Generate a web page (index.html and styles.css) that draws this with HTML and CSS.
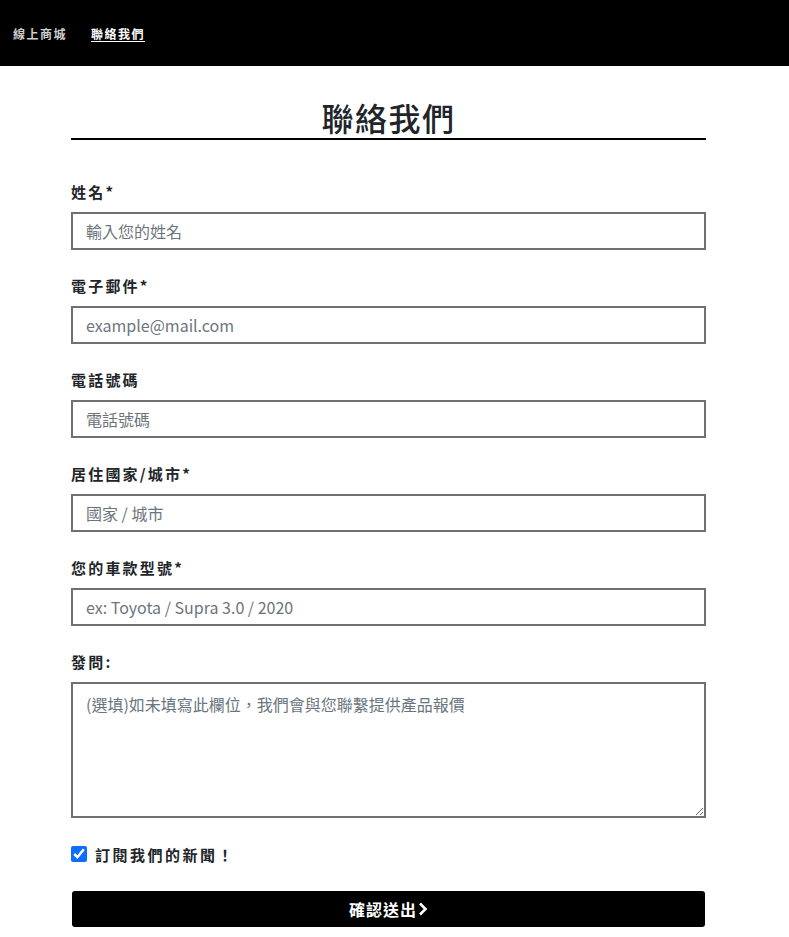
FILE: index.html
```html
<!DOCTYPE html>
<html lang="zh-Hant">
<head>
<meta charset="utf-8">
<title>聯絡我們</title>
<link rel="stylesheet" href="styles.css">
</head>
<body>
<nav class="topbar">
  <a class="nav-link" href="#">線上商城</a>
  <a class="nav-link active" href="#">聯絡我們</a>
</nav>
<main class="page">
  <h1 class="title">聯絡我們</h1>
  <form class="form">
    <div class="field">
      <label class="label">姓名*</label>
      <input class="input" type="text" placeholder="輸入您的姓名">
    </div>
    <div class="field">
      <label class="label">電子郵件*</label>
      <input class="input" type="text" placeholder="example@mail.com">
    </div>
    <div class="field">
      <label class="label">電話號碼</label>
      <input class="input" type="text" placeholder="電話號碼">
    </div>
    <div class="field">
      <label class="label">居住國家/城市*</label>
      <input class="input" type="text" placeholder="國家 / 城市">
    </div>
    <div class="field">
      <label class="label">您的車款型號*</label>
      <input class="input" type="text" placeholder="ex: Toyota / Supra 3.0 / 2020">
    </div>
    <div class="field">
      <label class="label">發問:</label>
      <textarea class="input textarea" placeholder="(選填)如未填寫此欄位，我們會與您聯繫提供產品報價"></textarea>
    </div>
    <label class="check">
      <input type="checkbox" checked>
      <span>訂閱我們的新聞！</span>
    </label>
    <button class="submit" type="button">確認送出<svg width="10" height="14" viewBox="0 0 10 14"><path d="M2 1.5 L7.5 7 L2 12.5" fill="none" stroke="#fff" stroke-width="2.6"/></svg></button>
  </form>
</main>
</body>
</html>
```

FILE: styles.css
```css
* { box-sizing: border-box; }
body {
  margin: 0;
  font-family: "Noto Sans CJK TC", "Noto Sans", sans-serif;
  color: #212529;
  background: #fff;
}
.topbar {
  height: 66px;
  background: #000;
  display: flex;
  align-items: center;
  padding-left: 13px;
  gap: 24px;
}
.nav-link {
  color: #cfcfcf;
  font-size: 12px;
  font-weight: 700;
  letter-spacing: 1.5px;
  text-decoration: none;
}
.nav-link.active {
  color: #fff;
  text-decoration: underline;
  text-underline-offset: 2px;
}
.page {
  width: 635px;
  margin-left: 71px;
  padding-top: 30px;
  padding-bottom: 10px;
}
.title {
  margin: 0;
  text-align: center;
  font-size: 32px;
  font-weight: 500;
  line-height: 42px;
  letter-spacing: 1.5px;
  border-bottom: 2px solid #000;
  padding-bottom: 0;
}
.form {
  padding-top: 41px;
}
.field {
  display: flex;
  flex-direction: column;
  margin-bottom: 25px;
}
.label {
  font-size: 15px;
  font-weight: 700;
  letter-spacing: 2.2px;
  line-height: 22px;
  margin-bottom: 9px;
}
.input {
  display: block;
  width: 100%;
  height: 38px;
  border: 2px solid #707070;
  border-radius: 0;
  padding: 0 13px;
  font-family: "Noto Sans CJK TC", "Noto Sans", sans-serif;
  font-size: 16px;
  color: #212529;
  outline: none;
}
.input::placeholder { color: #6c757d; }
.textarea {
  height: 136px;
  padding: 8px 13px;
  resize: vertical;
  line-height: 24px;
}
.check {
  display: flex;
  align-items: center;
  gap: 8px;
  margin-top: 1px;
  height: 22px;
  font-size: 15px;
  font-weight: 700;
  letter-spacing: 2.5px;
}
.check input {
  margin: 0;
  width: 16px;
  height: 16px;
  accent-color: #0d6efd;
}
.submit {
  margin-top: 26px;
  width: 633px;
  margin-left: 1px;
  height: 36px;
  background: #000;
  color: #fff;
  border: none;
  border-radius: 3px;
  font-family: "Noto Sans CJK TC", "Noto Sans", sans-serif;
  font-size: 16px;
  font-weight: 700;
  letter-spacing: 1px;
  display: flex;
  align-items: center;
  justify-content: center;
  gap: 1px;
  padding-left: 6px;
}
```
